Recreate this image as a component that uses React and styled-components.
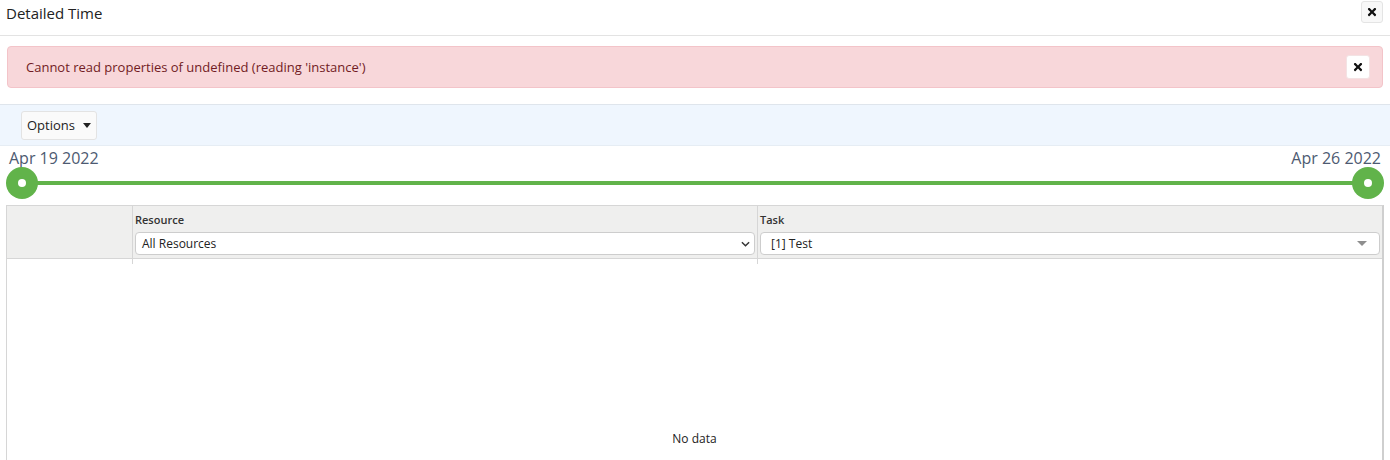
import React from "react";
import styled, { createGlobalStyle } from "styled-components";
import { FaTimes } from "react-icons/fa";

const Global = createGlobalStyle`
  body {
    margin: 0;
    font-family: "Open Sans", "Liberation Sans", sans-serif;
    background: #fff;
    color: #222;
  }
`;

export default function App() {
  return (
    <Page>
      <Global />
      <Header>
        <Title>Detailed Time</Title>
        <CloseButton size={22}>
          <FaTimes size={12} />
        </CloseButton>
      </Header>

      <Alert>
        <span>Cannot read properties of undefined (reading 'instance')</span>
        <CloseButton size={24} white>
          <FaTimes size={12} />
        </CloseButton>
      </Alert>

      <OptionsBar>
        <OptionsButton>
          Options <Caret />
        </OptionsButton>
      </OptionsBar>

      <Slider>
        <DateRow>
          <span>Apr 19 2022</span>
          <span>Apr 26 2022</span>
        </DateRow>
        <TrackRow>
          <Handle />
          <Track />
          <Handle />
        </TrackRow>
      </Slider>

      <Table>
        <HeadRow>
          <HeadCell />
          <HeadCell>
            <Label>Resource</Label>
            <Select>
              All Resources
              <Chevron viewBox="0 0 10 6">
                <path d="M1 1l4 4 4-4" fill="none" stroke="#333" strokeWidth="1.6" />
              </Chevron>
            </Select>
          </HeadCell>
          <HeadCell>
            <Label>Task</Label>
            <Select pad={10}>
              [1] Test
              <GrayCaret />
            </Select>
          </HeadCell>
        </HeadRow>
        <StubRow>
          <StubCell />
          <StubCell />
          <StubCell />
        </StubRow>
        <Empty>No data</Empty>
      </Table>
    </Page>
  );
}

const Page = styled.div`
  width: 1390px;
  height: 460px;
  overflow: hidden;
`;

const Header = styled.div`
  height: 35px;
  display: flex;
  align-items: center;
  justify-content: space-between;
  padding: 0 7px 0 6px;
  border-bottom: 1px solid #e3e3e3;
`;

const Title = styled.div`
  font-size: 15px;
  color: #222;
  margin-top: -10px;
`;

const CloseButton = styled.button`
  width: ${(p) => p.size}px;
  height: ${(p) => p.size}px;
  padding: 0;
  display: flex;
  align-items: center;
  justify-content: center;
  background: ${(p) => (p.white ? "#fff" : "#f8f8f8")};
  border: 1px solid ${(p) => (p.white ? "#f3e3e4" : "#e4e4e4")};
  border-radius: 3px;
  color: #111;
  margin-top: ${(p) => (p.white ? "0" : "-11px")};
`;

const Alert = styled.div`
  margin: 10px 7px 0 7px;
  height: 40px;
  display: flex;
  align-items: center;
  justify-content: space-between;
  padding: 0 12px 0 18px;
  background: #f8d7da;
  border: 1px solid #f3c4c9;
  border-radius: 4px;
  color: #721c24;
  font-size: 13px;
`;

const OptionsBar = styled.div`
  margin-top: 16px;
  height: 40px;
  display: flex;
  align-items: center;
  padding: 0 21px;
  background: #eff6fe;
  border-top: 1px solid #dfe5ec;
  border-bottom: 1px solid #e6edf4;
`;

const OptionsButton = styled.button`
  height: 29px;
  width: 76px;
  display: flex;
  align-items: center;
  gap: 8px;
  padding: 0 0 0 5px;
  font-family: inherit;
  font-size: 13px;
  color: #222;
  background: #fafafa;
  border: 1px solid #e3e3e3;
  border-radius: 3px;
`;

const Caret = styled.span`
  width: 0;
  height: 0;
  border-left: 4.5px solid transparent;
  border-right: 4.5px solid transparent;
  border-top: 5px solid #222;
`;

const Slider = styled.div`
  padding: 0 6px;
`;

const DateRow = styled.div`
  display: flex;
  justify-content: space-between;
  padding: 2px 3px 0 3px;
  height: 19px;
  font-size: 16px;
  line-height: 20px;
  color: #4d5a71;
`;

const TrackRow = styled.div`
  display: flex;
  align-items: center;
  height: 32px;
`;

const Handle = styled.div`
  width: 32px;
  height: 32px;
  box-sizing: border-box;
  border-radius: 50%;
  background: #61b34a;
  display: flex;
  align-items: center;
  justify-content: center;
  &::after {
    content: "";
    width: 8px;
    height: 8px;
    border-radius: 50%;
    background: #fff;
  }
`;

const Track = styled.div`
  flex: 1;
  height: 4px;
  margin: 0 -2px;
  background: #61b34a;
`;

const Table = styled.div`
  margin: 6px 6px 0 6px;
  border: 1px solid #d6d6d6;
  border-right: 2px solid #cfcfcf;
  height: 300px;
`;

const HeadRow = styled.div`
  display: grid;
  grid-template-columns: 125px 625px 1fr;
  height: 52px;
  background: #efefee;
  border-bottom: 1px solid #d6d6d6;
`;

const HeadCell = styled.div`
  padding: 5px 2px 0 2px;
  border-left: 1px solid #d6d6d6;
  &:first-child {
    border-left: none;
  }
`;

const Label = styled.div`
  font-size: 11px;
  font-weight: 600;
  color: #333;
  height: 21px;
  line-height: 17px;
`;

const Select = styled.div`
  height: 23px;
  box-sizing: border-box;
  display: flex;
  align-items: center;
  justify-content: space-between;
  padding: 0 8px 0 ${(p) => p.pad || 6}px;
  background: #fff;
  border: 1px solid #cdcdcd;
  border-radius: 4px;
  font-size: 12px;
  color: #222;
`;

const Chevron = styled.svg`
  width: 9px;
  height: 6px;
  margin-right: -4px;
`;

const GrayCaret = styled.span`
  width: 0;
  height: 0;
  margin-right: 4px;
  border-left: 5px solid transparent;
  border-right: 5px solid transparent;
  border-top: 5px solid #8e8e8e;
`;

const StubRow = styled.div`
  display: grid;
  grid-template-columns: 125px 625px 1fr;
  height: 5px;
`;

const StubCell = styled.div`
  border-left: 1px solid #d6d6d6;
  &:first-child {
    border-left: none;
  }
`;

const Empty = styled.div`
  text-align: center;
  padding-top: 166px;
  font-size: 12px;
  color: #222;
`;
